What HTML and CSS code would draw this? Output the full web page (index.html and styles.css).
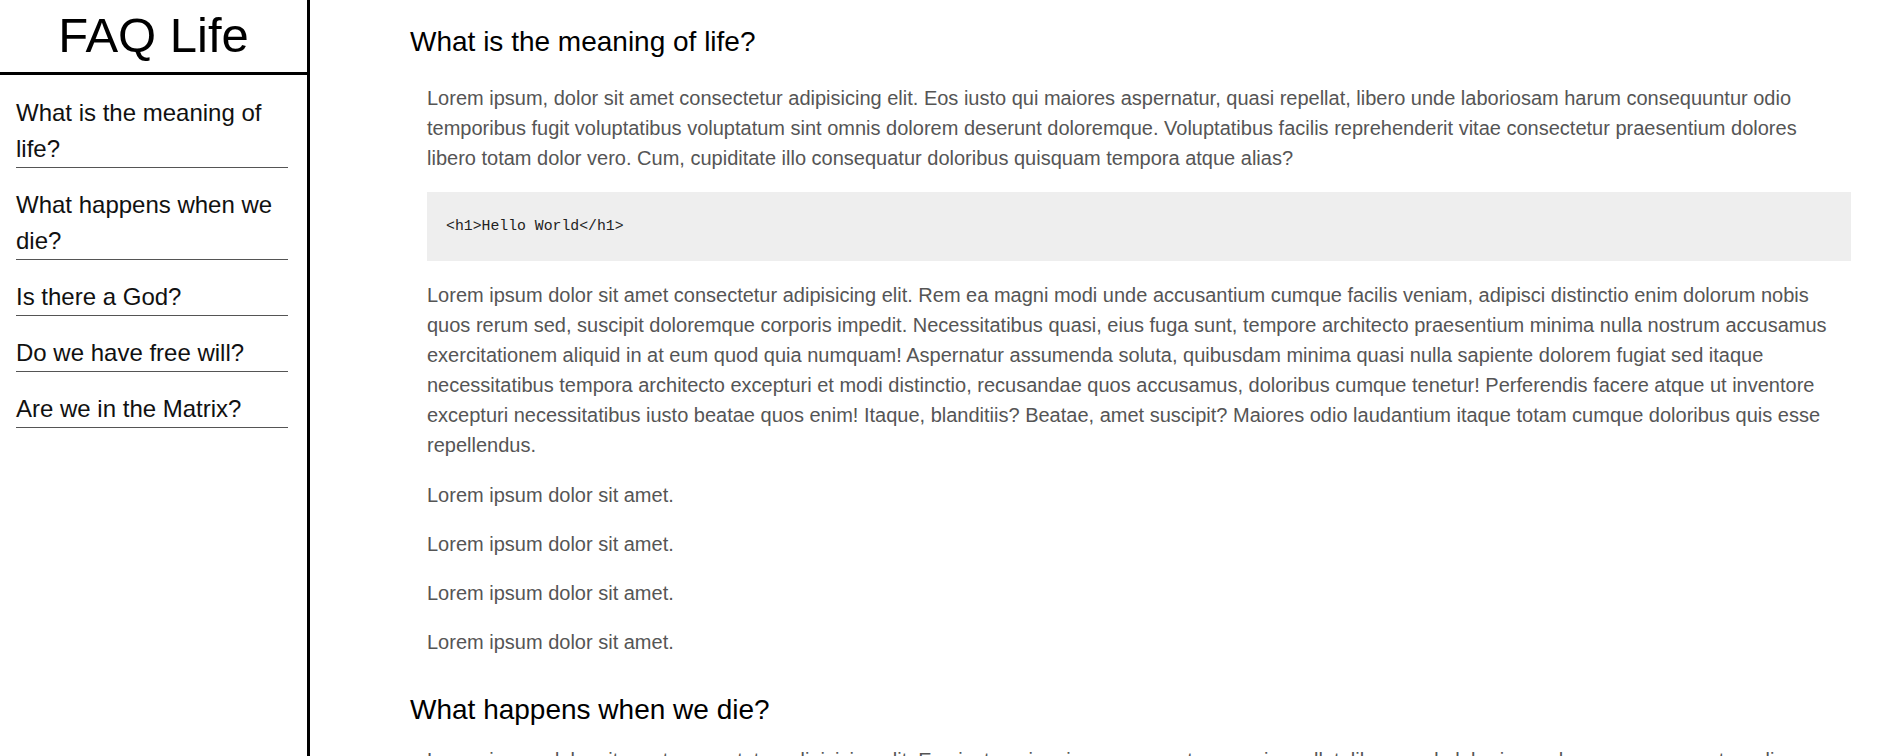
FILE: index.html
```html
<!DOCTYPE html>
<html lang="en">
<head>
<meta charset="utf-8">
<title>FAQ Life</title>
<link rel="stylesheet" href="styles.css">
</head>
<body>
<div class="layout">
  <aside class="sidebar">
    <h1 class="brand">FAQ Life</h1>
    <ul class="nav">
      <li class="nav-item">What is the meaning of life?</li>
      <li class="nav-item">What happens when we die?</li>
      <li class="nav-item">Is there a God?</li>
      <li class="nav-item">Do we have free will?</li>
      <li class="nav-item">Are we in the Matrix?</li>
    </ul>
  </aside>
  <main class="content">
    <section class="faq">
      <h2 class="faq-title">What is the meaning of life?</h2>
      <div class="faq-body">
        <p>Lorem ipsum, dolor sit amet consectetur adipisicing elit. Eos iusto qui maiores aspernatur, quasi repellat, libero unde laboriosam harum consequuntur odio temporibus fugit voluptatibus voluptatum sint omnis dolorem deserunt doloremque. Voluptatibus facilis reprehenderit vitae consectetur praesentium dolores libero totam dolor vero. Cum, cupiditate illo consequatur doloribus quisquam tempora atque alias?</p>
        <pre class="code">&lt;h1&gt;Hello World&lt;/h1&gt;</pre>
        <p>Lorem ipsum dolor sit amet consectetur adipisicing elit. Rem ea magni modi unde accusantium cumque facilis veniam, adipisci distinctio enim dolorum nobis quos rerum sed, suscipit doloremque corporis impedit. Necessitatibus quasi, eius fuga sunt, tempore architecto praesentium minima nulla nostrum accusamus exercitationem aliquid in at eum quod quia numquam! Aspernatur assumenda soluta, quibusdam minima quasi nulla sapiente dolorem fugiat sed itaque necessitatibus tempora architecto excepturi et modi distinctio, recusandae quos accusamus, doloribus cumque tenetur! Perferendis facere atque ut inventore excepturi necessitatibus iusto beatae quos enim! Itaque, blanditiis? Beatae, amet suscipit? Maiores odio laudantium itaque totam cumque doloribus quis esse repellendus.</p>
        <p>Lorem ipsum dolor sit amet.</p>
        <p>Lorem ipsum dolor sit amet.</p>
        <p>Lorem ipsum dolor sit amet.</p>
        <p>Lorem ipsum dolor sit amet.</p>
      </div>
    </section>
    <section class="faq">
      <h2 class="faq-title">What happens when we die?</h2>
      <div class="faq-body">
        <p>Lorem ipsum dolor sit amet consectetur adipisicing elit. Eos iusto qui maiores aspernatur, quasi repellat, libero unde laboriosam harum consequuntur odio temporibus fugit voluptatibus voluptatum sint omnis dolorem deserunt doloremque. Voluptatibus facilis reprehenderit vitae consectetur praesentium dolores libero totam dolor vero.</p>
        <p>Lorem ipsum dolor sit amet.</p>
      </div>
    </section>
  </main>
</div>
</body>
</html>
```

FILE: styles.css
```css
* {
  box-sizing: border-box;
}

html, body {
  margin: 0;
  padding: 0;
}

body {
  font-family: "Liberation Sans", Arial, sans-serif;
  color: #111;
  background: #fff;
}

.layout {
  display: flex;
  align-items: flex-start;
}

.sidebar {
  position: sticky;
  top: 0;
  flex: 0 0 310px;
  height: 100vh;
  border-right: 3px solid #000;
}

.brand {
  margin: 0;
  padding: 7px 0 9px;
  font-size: 49px;
  line-height: 56px;
  font-weight: normal;
  text-align: center;
  color: #000;
  border-bottom: 3px solid #000;
}

.nav {
  list-style: none;
  margin: 0;
  padding: 19.5px 19px 0 16px;
}

.nav-item {
  font-size: 24px;
  line-height: 36px;
  color: #111;
  border-bottom: 1px solid #555;
  margin-bottom: 19.2px;
}

.content {
  flex: 1 1 auto;
  min-width: 0;
  padding: 0 29px 0 100px;
}

.faq {
  padding-top: 26px;
}

.faq + .faq {
  padding-top: 18px;
}

.faq-title {
  margin: 0 0 25px;
  font-size: 28px;
  line-height: 32px;
  font-weight: normal;
  color: #000;
}

.faq + .faq .faq-title {
  margin-bottom: 19px;
}

.faq-body {
  margin-left: 17px;
}

.faq-body p {
  margin: 19.2px 0;
  font-size: 20px;
  line-height: 30px;
  color: #555;
}

.faq-body p:first-child {
  margin-top: 0;
}

.code {
  margin: 19px 0;
  padding: 24px 19px 24px;
  background: #eee;
  font-family: "Liberation Mono", "DejaVu Sans Mono", monospace;
  font-size: 14.8px;
  line-height: 21px;
  color: #222;
  white-space: pre;
}
```
